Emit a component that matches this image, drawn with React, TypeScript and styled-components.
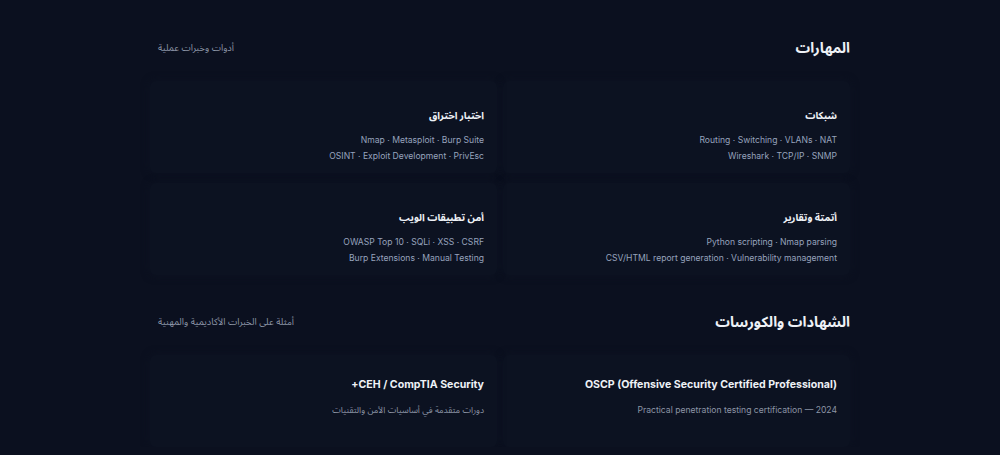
import React from 'react'
import styled, { createGlobalStyle } from 'styled-components'

const GlobalStyle = createGlobalStyle`
  html, body {
    margin: 0;
    padding: 0;
    background: #0b101f;
  }
  body {
    font-family: Inter, "Noto Sans Arabic", "DejaVu Sans", sans-serif;
    color: #e6e9f0;
  }
`

type Skill = { title: string; lines: string[] }
type Cert = { title: string; desc: string }

const skills: Skill[] = [
  { title: 'شبكات', lines: ['Routing · Switching · VLANs · NAT', 'Wireshark · TCP/IP · SNMP'] },
  { title: 'اختبار اختراق', lines: ['Nmap · Metasploit · Burp Suite', 'OSINT · Exploit Development · PrivEsc'] },
  { title: 'أتمتة وتقارير', lines: ['Python scripting · Nmap parsing', 'CSV/HTML report generation · Vulnerability management'] },
  { title: 'أمن تطبيقات الويب', lines: ['OWASP Top 10 · SQLi · XSS · CSRF', 'Burp Extensions · Manual Testing'] },
]

const certs: Cert[] = [
  { title: 'OSCP (Offensive Security Certified Professional)', desc: 'Practical penetration testing certification — 2024' },
  { title: 'CEH / CompTIA Security+', desc: 'دورات متقدمة في أساسيات الأمن والتقنيات' },
]

export default function App() {
  return (
    <>
      <GlobalStyle />
      <Page dir="rtl">
        <Section>
          <Header>
            <Title>المهارات</Title>
            <Subtitle>أدوات وخبرات عملية</Subtitle>
          </Header>
          <Grid>
            {skills.map((s) => (
              <Card key={s.title}>
                <CardTitle>{s.title}</CardTitle>
                <Lines>
                  {s.lines.map((l) => (
                    <Line key={l}>{l}</Line>
                  ))}
                </Lines>
              </Card>
            ))}
          </Grid>
        </Section>
        <Section $top={35}>
          <Header>
            <Title>الشهادات والكورسات</Title>
            <Subtitle>أمثلة على الخبرات الأكاديمية والمهنية</Subtitle>
          </Header>
          <Grid>
            {certs.map((c) => (
              <CertCard key={c.title}>
                <CertTitle>{c.title}</CertTitle>
                <CertDesc>{c.desc}</CertDesc>
              </CertCard>
            ))}
          </Grid>
        </Section>
      </Page>
    </>
  )
}

const Page = styled.main`
  width: 700px;
  margin: 0 auto;
  padding-top: 36px;
`

const Section = styled.section<{ $top?: number }>`
  margin-top: ${(p) => p.$top ?? 0}px;
`

const Header = styled.div`
  display: flex;
  justify-content: space-between;
  align-items: center;
  height: 24px;
  margin-bottom: 21px;
`

const Title = styled.h2`
  margin: 0;
  font-size: 14.5px;
  font-weight: 700;
  color: #eef1f6;
`

const Subtitle = styled.p`
  margin: 0;
  padding-left: 8px;
  font-size: 9.3px;
  color: #8c95a6;
`

const Grid = styled.div`
  display: grid;
  grid-template-columns: 1fr 1fr;
  gap: 10px 6px;
`

const Card = styled.div`
  background: #0c1221;
  border-radius: 6px;
  padding: 26px 13px 12px;
  display: flex;
  flex-direction: column;
  align-items: flex-start;
  height: 92px;
  box-sizing: border-box;
  box-shadow: 0 0 8px rgba(13, 19, 34, 0.9);
`

const CardTitle = styled.h3`
  margin: 0 0 9px;
  font-size: 10px;
  font-weight: 700;
  color: #eef1f6;
  line-height: 16px;
`

const Lines = styled.div`
  display: flex;
  flex-direction: column;
`

const Line = styled.span`
  font-size: 8.6px;
  line-height: 16px;
  color: #97a3bd;
`

const CertCard = styled(Card)`
  padding-top: 22px;
`

const CertTitle = styled.h3`
  margin: 0 0 10px;
  font-size: 10.6px;
  font-weight: 700;
  color: #eef1f6;
  line-height: 16px;
`

const CertDesc = styled.p`
  margin: 0;
  font-size: 8.6px;
  color: #8c95a6;
  line-height: 14px;
`
